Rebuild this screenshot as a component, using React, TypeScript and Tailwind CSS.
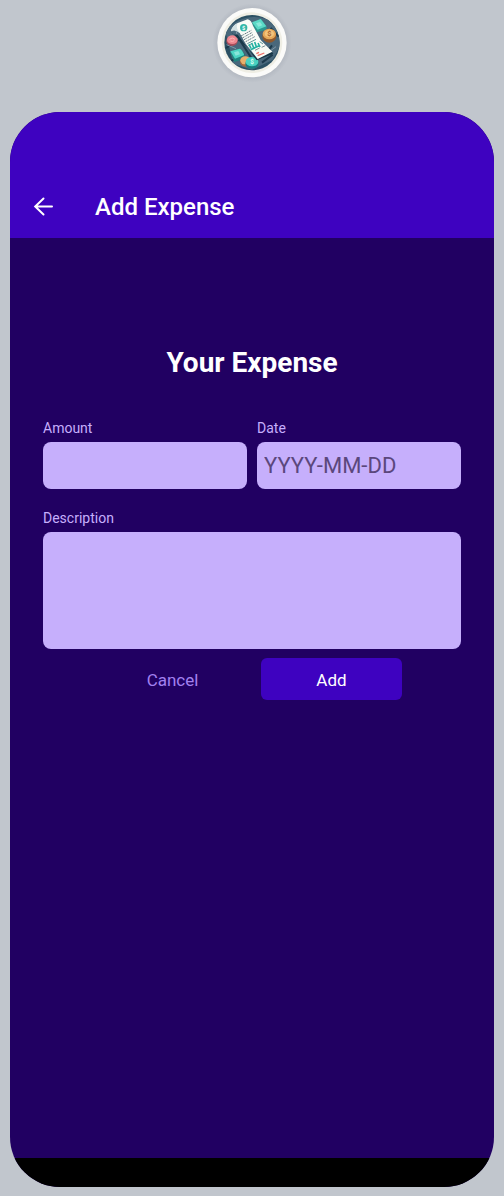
import React from "react";

function Logo() {
  return (
    <svg className="size-20 shrink-0" viewBox="0 0 240 240" role="img" aria-label="Expense tracker">
      <defs>
        <radialGradient id="halo">
          <stop offset="0.82" stopColor="#9fa5b0" stopOpacity="0.5" />
          <stop offset="1" stopColor="#9fa5b0" stopOpacity="0" />
        </radialGradient>
        <clipPath id="disc">
          <circle cx="120" cy="116" r="83" />
        </clipPath>
      </defs>
      <circle cx="120" cy="117" r="119" fill="url(#halo)" />
      <circle cx="120" cy="116" r="104" fill="#fbfbf9" />
      <circle cx="120" cy="116" r="91" fill="#efeee4" />
      <circle cx="120" cy="116" r="83" fill="#2b5063" />
      <g clipPath="url(#disc)">
        <path d="M40 82Q92 22 166 46L190 60 207 120 182 168 120 197 64 180Z" fill="#49687b" />
        <path d="M42 132L82 106 122 168M58 170l40-18M176 72l24 26M180 124l-20 28M150 176l32-24" stroke="#1c3a4c" strokeWidth="6" fill="none" />
        <path d="M44 122l28 12M72 78l6 28M168 146l24-18" stroke="#8299a7" strokeWidth="3" fill="none" />
      </g>
      <path d="M120 59l27-14 17 23q2 8-7 11l-23 6Z" fill="#2b978f" />
      <path d="M120 55l26-10 17 22-26 10Z" fill="#5ad9c6" />
      <path d="M132 58l12-4 7 10-12 4Z" fill="#8ae8da" />
      <ellipse cx="60" cy="111" rx="17" ry="15" fill="#a84d5b" />
      <ellipse cx="61" cy="107" rx="16" ry="13" fill="#ef8790" />
      <path d="M52 106q9-8 17 0M55 111q7 3 12-1" stroke="#ffb5b5" strokeWidth="3" fill="none" />
      <path d="M54 144l29-10q7 0 15 20l-4 11-27 9Z" fill="#20867f" />
      <path d="M55 142l28-8q6 1 14 19l-28 11Z" fill="#4dd5c3" />
      <path d="M66 145l13-4 5 10-13 4Z" fill="#88e6d9" />
      <ellipse cx="172" cy="97" rx="21" ry="19" fill="#8f592d" />
      <ellipse cx="172" cy="90" rx="20" ry="16" fill="#e6a858" />
      <ellipse cx="172" cy="89" rx="14" ry="11" fill="#f3c37c" />
      <text x="172" y="97" textAnchor="middle" className="fill-[#a8652c] font-['Roboto'] text-[22px] font-bold">$</text>
      <ellipse cx="101" cy="173" rx="17" ry="15" fill="#a6683c" />
      <ellipse cx="100" cy="169" rx="15" ry="12" fill="#e8b06c" />
      <ellipse cx="120" cy="179" rx="20" ry="15" fill="#187c7d" />
      <ellipse cx="120" cy="173" rx="19" ry="14" fill="#48d1c1" />
      <text x="120" y="180" textAnchor="middle" className="fill-[#d8fff4] font-['Roboto'] text-[19px] font-bold">$</text>
      <path d="M57 83Q64 96 76 91L134 169 184 149 178 142 138 164Z" fill="#173747" />
      <path d="M57 82Q60 65 77 57L107 46Q118 49 123 65L146 108 181 143 137 165 101 119 83 87Q69 74 57 82Z" fill="#f8fbf6" />
      <path d="M57 82Q60 66 77 58Q70 72 83 87Q69 74 57 82Z" fill="#d3e1e2" />
      <circle cx="95" cy="71" r="11" fill="#31b7a8" />
      <text x="95" y="77" textAnchor="middle" className="fill-white font-['Roboto'] text-[17px] font-bold">$</text>
      <g fill="none" strokeWidth="3">
        <path d="M87 96l31-17M91 102l30-17M96 107l27-15M101 113l27-15" stroke="#647a83" strokeDasharray="6 2 3 2" />
        <path d="M106 119l26-13M109 124l12-6M143 113l10 7" stroke="#5e9799" />
        <path d="M111 121l6 12M119 117l7 16M128 114l6 17M138 117l6 12M116 137l24-11" stroke="#24b2a3" strokeWidth="5" />
        <path d="M129 139l14-7M149 130l11-5" stroke="#7b9095" />
        <path d="M133 149l8-4M137 155l20-8" stroke="#f07068" strokeWidth="4" />
      </g>
    </svg>
  );
}

const labelStyle = "flex flex-col text-[14px] leading-5 text-[#c6affc]";
const fieldStyle =
  "mt-1 w-full rounded-lg bg-[#c6affc] px-[7px] text-[22px] text-[#210062] outline-none placeholder:text-[#5b477c] focus:ring-2 focus:ring-white";

export default function App() {
  return (
    <main className="flex min-h-screen flex-col bg-[#c1c6cd] px-[10px] pt-1 pb-[9px] font-['Roboto',sans-serif]">
      <div className="flex justify-center">
        <Logo />
      </div>
      <section className="mt-7 flex grow flex-col overflow-hidden rounded-[50px] bg-[#210062]">
        <header className="flex items-center gap-[39px] bg-[#3e02c0] px-5 pt-[77px] pb-[13px] text-white">
          <button type="button" aria-label="Back" className="p-px">
            <svg className="size-6" viewBox="0 0 24 24" fill="none" stroke="currentColor" strokeWidth="2" strokeLinecap="round" aria-hidden="true">
              <path d="M21 11.5H4.5M12.5 3.5l-8.3 8 8.3 8" />
            </svg>
          </button>
          <h1 className="text-[24px] leading-9 font-medium">Add Expense</h1>
        </header>
        <form className="flex grow flex-col px-[33px] pt-[107px]" onSubmit={(event) => event.preventDefault()}>
          <h2 className="text-center text-[28px] leading-9 font-bold text-white">Your Expense</h2>
          <div className="mt-[37px] grid grid-cols-2 gap-[10px]">
            <label className={labelStyle}>
              Amount
              <input className={`${fieldStyle} h-[47px]`} type="text" inputMode="decimal" name="amount" />
            </label>
            <label className={labelStyle}>
              Date
              <input className={`${fieldStyle} h-[47px]`} type="text" name="date" placeholder="YYYY-MM-DD" maxLength={10} />
            </label>
          </div>
          <label className={`${labelStyle} mt-[19px]`}>
            Description
            <textarea className={`${fieldStyle} h-[117px] resize-none py-2`} name="description" />
          </label>
          <div className="mt-[9px] flex justify-center gap-[18px] text-[17px] leading-6">
            <button type="button" className="w-[141px] rounded-md pt-[10px] pb-2 text-[#a281f0]">Cancel</button>
            <button type="submit" className="w-[141px] rounded-md bg-[#3e02c0] pt-[10px] pb-2 text-white">Add</button>
          </div>
        </form>
        <div className="h-[29px] bg-black" />
      </section>
    </main>
  );
}
